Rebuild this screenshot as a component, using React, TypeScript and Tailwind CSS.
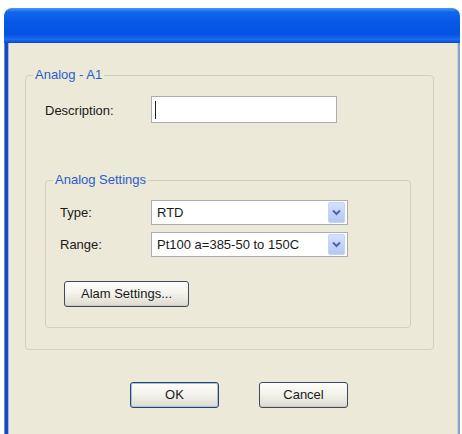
import React from "react";

function DropArrow() {
  return (
    <div className="w-[17px] h-[21px] mr-[2px] rounded-[2px] bg-gradient-to-b from-[#d4e1fb] to-[#b3c8f4] border border-[#c3d3f5] flex items-center justify-center">
      <svg width="9" height="7" viewBox="0 0 9 7">
        <path d="M1 1.5 L4.5 5 L8 1.5" fill="none" stroke="#4a67a8" strokeWidth="2" />
      </svg>
    </div>
  );
}

function Combo({ value }: { value: string }) {
  return (
    <div className="w-[197px] h-[25px] bg-white border border-[#a9aeb3] flex items-center justify-between">
      <span className="pl-[5px] text-[#1a1a1a]">{value}</span>
      <DropArrow />
    </div>
  );
}

function XpButton({ label, def, w }: { label: string; def?: boolean; w: string }) {
  return (
    <div
      className={
        w +
        " h-[26px] rounded-[3px] border flex items-center justify-center bg-gradient-to-b from-[#fdfdfb] via-[#f3f2ea] to-[#dcdad0] text-[#1a1a1a] " +
        (def
          ? "border-[#2c4466] shadow-[inset_0_0_0_1px_#a9bee6]"
          : "border-[#3e4a5c] shadow-[inset_0_-1px_0_#cfcabb]")
      }
    >
      {label}
    </div>
  );
}

export default function App() {
  return (
    <div className="w-[462px] h-[434px] bg-white overflow-hidden font-['Liberation_Sans',Arial,sans-serif] text-[13px] leading-[16px]">
      <div className="ml-[4px] mt-[8px] w-[456px] h-[426px] flex flex-col rounded-t-[8px] overflow-hidden">
        <div className="h-[35px] shrink-0 bg-[linear-gradient(to_bottom,#4a96fa_0%,#1265ec_12%,#0757e6_45%,#0552e2_75%,#1a6af0_90%,#0a47cf_100%)]" />
        <div className="flex-1 flex">
          <div className="w-[5px] flex">
            <div className="w-[1px] bg-[#5e8ad8]" />
            <div className="w-[3px] bg-[#1b47bd]" />
            <div className="w-[1px] bg-[#9db6e6]" />
          </div>
          <div className="flex-1 bg-[#ece9d8] flex flex-col">
            <fieldset className="ml-[16px] mt-[24px] w-[409px] border border-[#d2cfbd] rounded-[4px] p-0 m-0">
              <legend className="ml-[7px] px-[2px] text-[#2a5ccc] leading-[16px]">Analog - A1</legend>
              <div className="flex flex-col pl-[19px] pb-[21px]">
                <div className="mt-[13px] flex items-center">
                  <span className="w-[106px] text-[#1a1a1a] mt-[2px]">Description:</span>
                  <div className="w-[186px] h-[27px] bg-white border border-[#a9aeb3] flex items-center pl-[3px]">
                    <div className="w-[1px] h-[18px] bg-[#222]" />
                  </div>
                </div>
                <fieldset className="mt-[49px] w-[366px] border border-[#d2cfbd] rounded-[4px] p-0 m-0">
                  <legend className="ml-[7px] px-[2px] text-[#2a5ccc] leading-[16px]">Analog Settings</legend>
                  <div className="flex flex-col pl-[14px] pb-[20px]">
                    <div className="mt-[12px] flex items-center">
                      <span className="w-[91px] text-[#1a1a1a]">Type:</span>
                      <Combo value="RTD" />
                    </div>
                    <div className="mt-[7px] flex items-center">
                      <span className="w-[91px] text-[#1a1a1a]">Range:</span>
                      <Combo value="Pt100 a=385-50 to 150C" />
                    </div>
                    <div className="mt-[24px] ml-[4px]">
                      <XpButton label="Alam Settings..." w="w-[125px]" />
                    </div>
                  </div>
                </fieldset>
              </div>
            </fieldset>
            <div className="mt-[32px] ml-[121px] flex gap-[40px]">
              <XpButton label="OK" def w="w-[89px]" />
              <XpButton label="Cancel" w="w-[89px]" />
            </div>
          </div>
          <div className="w-[3px] flex">
            <div className="w-[1px] bg-[#c9d3e2]" />
            <div className="w-[2px] bg-[#8ea4c6]" />
          </div>
        </div>
      </div>
    </div>
  );
}
